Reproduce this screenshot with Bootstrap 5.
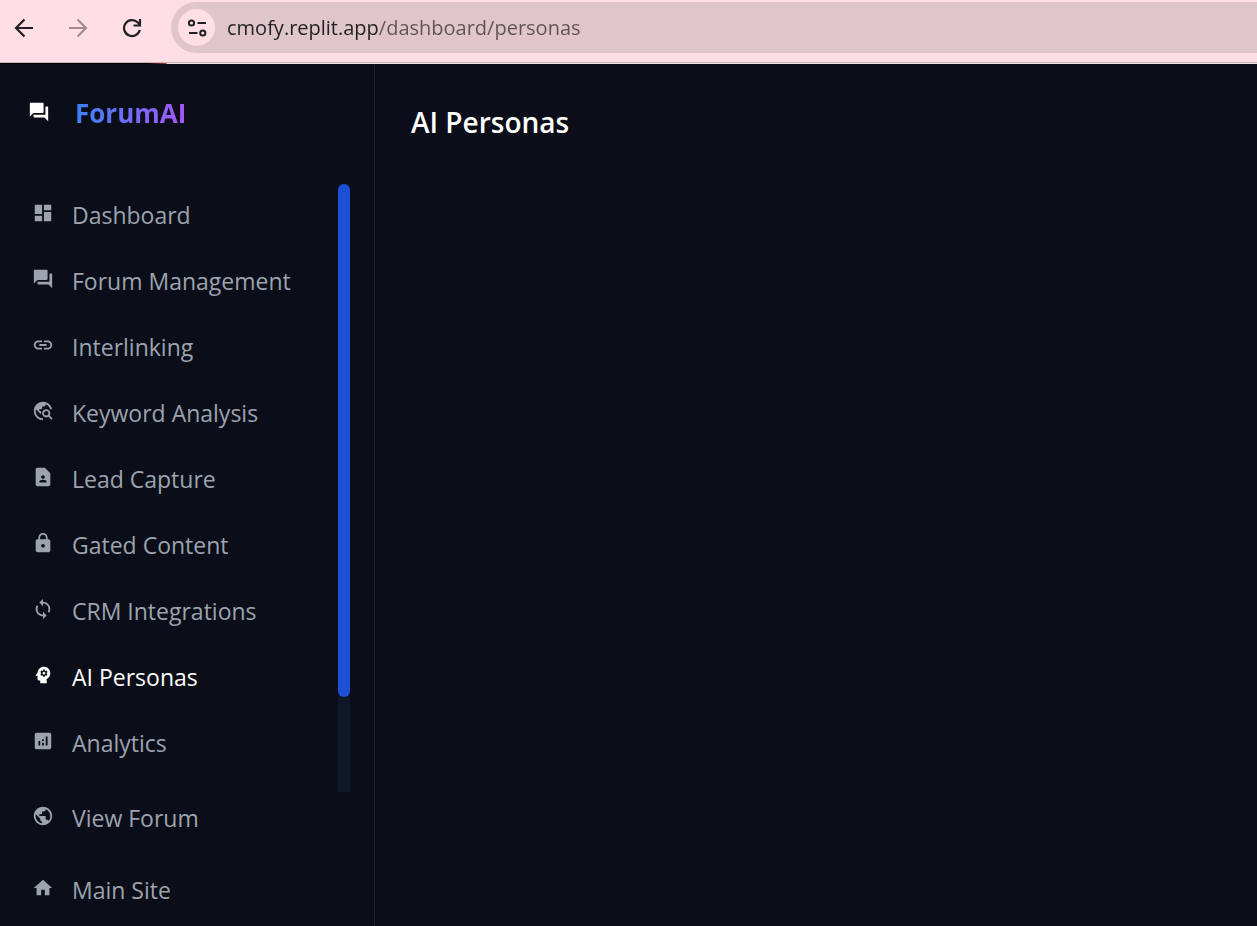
<!DOCTYPE html>
<html lang="en">
<head>
<meta charset="utf-8">
<meta name="viewport" content="width=device-width, initial-scale=1">
<title>AI Personas - ForumAI</title>
<link href="https://cdn.jsdelivr.net/npm/bootstrap@5.3.0/dist/css/bootstrap.min.css" rel="stylesheet">
<style>
  body { font-family: "Segoe UI", "Open Sans", "Noto Sans", sans-serif; background: #0b0e18; color: #fff; }
  svg { display: block; flex: none; }

  /* Browser toolbar, with the page-loading strip along its lower edge */
  .toolbar { background: linear-gradient(90deg, #000 148px, #a33 166px, #f0e6e8 167px) bottom / 100% 1px no-repeat, linear-gradient(#c9b4b8, #c9b4b8) 0 62px / 100% 1px no-repeat, #ffdfe5; height: 64px; padding: 2px 0 0 8px; gap: 22px; color: #1f2023; }
  .tool-btn { width: 32px; height: 51px; padding: 0; border: 0; background: none; color: inherit; }
  .tool-btn svg { margin: auto; }
  .tool-btn:disabled { color: #a08b90; }
  .omnibox { height: 51px; padding-left: 7px; gap: 12px; background: #e0c5ca; border-radius: 26px 0 0 26px; margin-left: 1px; }
  .site-btn { width: 37px; height: 37px; border-radius: 50%; background: #ffdfe5; flex: none; }
  .url-input { border: 0; outline: 0; padding: 0; font-size: 20px; line-height: 30px; color: #1f2023;
    background: linear-gradient(90deg, #1f2023 152px, #5f5357 152px); -webkit-background-clip: text; background-clip: text; -webkit-text-fill-color: transparent; }

  /* Sidebar */
  .sidebar { width: 375px; border-right: 1px solid #1b2536; }
  .brand { padding: 28px 28px 0; height: 120px; gap: 25px; color: #fff; }
  .brand-name { font-size: 26px; line-height: 42px; font-weight: 700; background: linear-gradient(90deg, #3b82f6, #a855f7); -webkit-background-clip: text; background-clip: text; -webkit-text-fill-color: transparent; }
  .brand svg { margin-top: 9px; }
  .menu-area { padding: 0 24px 0 32px; }
  .menu-link { height: 66px; padding-bottom: 4px; gap: 18px; color: #9ca3af; font-size: 23px; line-height: 36px; text-decoration: none; }
  .menu-link svg { margin-bottom: 4px; }
  .menu-link:hover, .menu-link.active { color: #fff; }
  .menu-foot { padding: 0 32px 6px; gap: 16px; }
  .menu-foot .menu-link { height: 56px; }
  .scroll-track { width: 12px; background: #0f172a; }
  .scroll-thumb { height: 513px; border-radius: 6px; background: #1d4ed8; }
  .page-main { padding: 36px; }
  .page-title { font-size: 28px; line-height: 44px; font-weight: 600; margin: 0; }
</style>
</head>
<body class="d-flex flex-column min-vh-100">
<header class="toolbar d-flex align-items-start">
  <button class="tool-btn" type="button" aria-label="Back"><svg width="20" height="20" viewBox="0 0 20 20" fill="none" stroke="currentColor" stroke-width="2.200"><path d="M19 10H2.500M10.500 1.500 2 10l8.500 8.500"/></svg></button>
  <button class="tool-btn" type="button" aria-label="Forward" disabled><svg width="20" height="20" viewBox="0 0 20 20" fill="none" stroke="currentColor" stroke-width="2.200"><path d="M1 10h16.500M9.500 1.500 18 10l-8.500 8.500"/></svg></button>
  <button class="tool-btn" type="button" aria-label="Reload"><svg width="20" height="20" viewBox="0 0 20 20" fill="none" stroke="currentColor" stroke-width="2.200"><path d="M17.800 12A8 8 0 1 1 15.800 4.500L18 6.800M18 1v6.500h-6.500"/></svg></button>
  <div class="omnibox d-flex align-items-center flex-grow-1">
    <button class="site-btn btn p-0 border-0" type="button" aria-label="View site information"><svg class="m-auto" width="20" height="20" viewBox="0 0 20 20" fill="none" stroke="#1f2023" stroke-width="2"><circle cx="4.500" cy="5" r="2.600"/><path d="M10.500 5H19M2 15h8.500"/><circle cx="15.800" cy="15" r="2.600"/></svg></button>
    <input class="url-input flex-grow-1" type="text" aria-label="Address" value="cmofy.replit.app/dashboard/personas">
  </div>
</header>
<div class="d-flex flex-grow-1">
  <aside class="sidebar d-flex flex-column flex-shrink-0">
    <a href="#" class="brand d-flex align-items-start text-decoration-none">
      <svg width="22" height="22" viewBox="0 0 24 24" fill="currentColor"><path d="M21 6h-2v9H6v2c0 .55.45 1 1 1h11l4 4V7c0-.55-.45-1-1-1zm-4 6V3c0-.55-.45-1-1-1H3c-.55 0-1 .45-1 1v14l4-4h10c.55 0 1-.45 1-1z"/></svg>
      <span class="brand-name">ForumAI</span>
    </a>
    <div class="menu-area d-flex flex-grow-1">
      <nav class="flex-grow-1" aria-label="Dashboard">
        <a href="#" class="menu-link d-flex align-items-center"><svg width="22" height="22" viewBox="0 0 24 24" fill="currentColor"><path d="M3 13h8V3H3v10zm0 8h8v-6H3v6zm10 0h8V11h-8v10zm0-18v6h8V3h-8z"/></svg><span>Dashboard</span></a>
        <a href="#" class="menu-link d-flex align-items-center"><svg width="22" height="22" viewBox="0 0 24 24" fill="currentColor"><path d="M21 6h-2v9H6v2c0 .55.45 1 1 1h11l4 4V7c0-.55-.45-1-1-1zm-4 6V3c0-.55-.45-1-1-1H3c-.55 0-1 .45-1 1v14l4-4h10c.55 0 1-.45 1-1z"/></svg><span>Forum Management</span></a>
        <a href="#" class="menu-link d-flex align-items-center"><svg width="22" height="22" viewBox="0 0 24 24" fill="currentColor"><path d="M3.900 12c0-1.710 1.390-3.100 3.100-3.100h4V7H7c-2.760 0-5 2.240-5 5s2.240 5 5 5h4v-1.900H7c-1.710 0-3.100-1.390-3.100-3.100zM8 13h8v-2H8v2zm9-6h-4v1.900h4c1.710 0 3.100 1.390 3.100 3.100s-1.390 3.100-3.100 3.100h-4V17h4c2.760 0 5-2.240 5-5s-2.240-5-5-5z"/></svg><span>Interlinking</span></a>
        <a href="#" class="menu-link d-flex align-items-center"><svg width="22" height="22" viewBox="0 0 24 24" fill="currentColor"><path d="M19.300 16.900c.4-.7.7-1.500.7-2.400 0-2.500-2-4.500-4.500-4.500S11 12 11 14.500s2 4.500 4.500 4.500c.9 0 1.700-.3 2.400-.7l3.200 3.200 1.400-1.400-3.200-3.200zm-3.800.1c-1.400 0-2.500-1.100-2.500-2.500s1.100-2.500 2.500-2.500 2.500 1.100 2.500 2.500-1.100 2.500-2.500 2.500zM12 20v2C6.480 22 2 17.520 2 12S6.480 2 12 2c4.840 0 8.870 3.440 9.800 8h-2.070c-.64-2.460-2.400-4.470-4.730-5.410V5c0 1.100-.9 2-2 2h-2v2c0 .55-.45 1-1 1H8v2h2v3H9l-4.790-4.790C4.080 10.790 4 11.380 4 12c0 4.410 3.590 8 8 8z"/></svg><span>Keyword Analysis</span></a>
        <a href="#" class="menu-link d-flex align-items-center"><svg width="22" height="22" viewBox="0 0 24 24" fill="currentColor"><path d="M14 2H6c-1.100 0-2 .9-2 2v16c0 1.100.9 2 2 2h12c1.100 0 2-.9 2-2V8l-6-6zm-2 8c1.100 0 2 .9 2 2s-.9 2-2 2-2-.9-2-2 .9-2 2-2zm4 8H8v-.57c0-.81.48-1.530 1.220-1.850.85-.37 1.790-.58 2.780-.58.99 0 1.930.21 2.780.58.74.32 1.220 1.040 1.220 1.850V18z"/></svg><span>Lead Capture</span></a>
        <a href="#" class="menu-link d-flex align-items-center"><svg width="22" height="22" viewBox="0 0 24 24" fill="currentColor"><path d="M18 8h-1V6c0-2.760-2.240-5-5-5S7 3.240 7 6v2H6c-1.100 0-2 .9-2 2v10c0 1.100.9 2 2 2h12c1.100 0 2-.9 2-2V10c0-1.100-.9-2-2-2zm-6 9c-1.100 0-2-.9-2-2s.9-2 2-2 2 .9 2 2-.9 2-2 2zm3.100-9H8.900V6c0-1.710 1.390-3.100 3.100-3.100 1.710 0 3.100 1.390 3.100 3.100v2z"/></svg><span>Gated Content</span></a>
        <a href="#" class="menu-link d-flex align-items-center"><svg width="22" height="22" viewBox="0 0 24 24" fill="currentColor"><path d="M12 4V1L8 5l4 4V6c3.310 0 6 2.690 6 6 0 1.010-.25 1.970-.7 2.800l1.460 1.460C19.540 15.030 20 13.570 20 12c0-4.420-3.580-8-8-8zm0 14c-3.310 0-6-2.690-6-6 0-1.010.25-1.970.7-2.800L5.240 7.740C4.460 8.970 4 10.430 4 12c0 4.420 3.580 8 8 8v3l4-4-4-4v3z"/></svg><span>CRM Integrations</span></a>
        <a href="#" class="menu-link active d-flex align-items-center" aria-current="page"><svg width="22" height="22" viewBox="0 0 24 24" fill="currentColor"><path d="M13 8.570c-.79 0-1.430.64-1.430 1.430s.64 1.430 1.430 1.430 1.430-.64 1.430-1.430-.64-1.430-1.430-1.430z"/><path d="M13 3C9.250 3 6.200 5.940 6.020 9.640L4.100 12.200c-.25.33-.01.8.4.8H6v3c0 1.100.9 2 2 2h1v3h7v-4.680c2.360-1.120 4-3.530 4-6.320 0-3.870-3.130-7-7-7zm3 7c0 .13-.01.26-.02.39l.83.66c.08.06.1.16.05.25l-.8 1.390c-.05.09-.16.12-.24.09l-.99-.4c-.21.16-.43.29-.67.39L14 13.830c-.01.1-.1.17-.2.17h-1.600c-.1 0-.18-.07-.2-.17l-.15-1.060c-.25-.1-.47-.23-.68-.39l-.99.4c-.09.03-.2 0-.25-.09l-.8-1.390c-.05-.08-.03-.19.05-.25l.84-.66c-.01-.13-.02-.26-.02-.39s.02-.27.04-.39l-.85-.66c-.08-.06-.1-.16-.05-.26l.8-1.380c.05-.09.15-.12.24-.09l1 .4c.2-.15.43-.29.67-.39l.15-1.060c.02-.1.1-.17.2-.17h1.600c.1 0 .18.07.2.17l.15 1.060c.24.1.46.23.67.39l1-.4c.09-.03.2 0 .24.09l.8 1.380c.05.09.03.2-.05.26l-.85.66c.03.12.04.25.04.39z"/></svg><span>AI Personas</span></a>
        <a href="#" class="menu-link d-flex align-items-center"><svg width="22" height="22" viewBox="0 0 24 24" fill="currentColor"><path d="M19 3H5c-1.100 0-2 .9-2 2v14c0 1.100.9 2 2 2h14c1.100 0 2-.9 2-2V5c0-1.100-.9-2-2-2zM9 17H7v-5h2v5zm4 0h-2v-3h2v3zm0-5h-2v-2h2v2zm4 5h-2V7h2v10z"/></svg><span>Analytics</span></a>
      </nav>
      <div class="scroll-track" aria-hidden="true"><div class="scroll-thumb"></div></div>
    </div>
    <nav class="menu-foot d-flex flex-column" aria-label="Site">
      <a href="#" class="menu-link d-flex align-items-center"><svg width="22" height="22" viewBox="0 0 24 24" fill="currentColor"><path d="M12 2C6.480 2 2 6.480 2 12s4.480 10 10 10 10-4.480 10-10S17.520 2 12 2zm-1 17.930c-3.950-.49-7-3.850-7-7.930 0-.62.08-1.210.21-1.790L9 15v1c0 1.100.9 2 2 2v1.930zm6.900-2.540c-.26-.81-1-1.390-1.900-1.390h-1v-3c0-.55-.45-1-1-1H8v-2h2c.55 0 1-.45 1-1V7h2c1.100 0 2-.9 2-2v-.41c2.930 1.190 5 4.060 5 7.410 0 2.080-.8 3.970-2.100 5.390z"/></svg><span>View Forum</span></a>
      <a href="#" class="menu-link d-flex align-items-center"><svg width="22" height="22" viewBox="0 0 24 24" fill="currentColor"><path d="M10 20v-6h4v6h5v-8h3L12 3 2 12h3v8z"/></svg><span>Main Site</span></a>
    </nav>
  </aside>
  <main class="page-main flex-grow-1">
    <h1 class="page-title">AI Personas</h1>
  </main>
</div>
<script src="https://cdn.jsdelivr.net/npm/bootstrap@5.3.0/dist/js/bootstrap.bundle.min.js"></script>
</body>
</html>
